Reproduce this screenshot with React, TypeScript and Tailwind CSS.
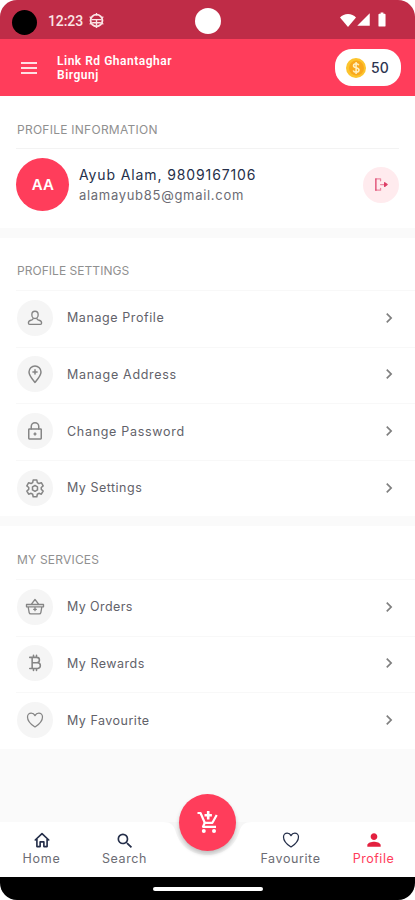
import type { ReactNode } from 'react'
import { MdBatteryFull, MdChevronRight, MdPerson, MdSearch, MdSignalCellular4Bar } from 'react-icons/md'
import { IoHeartOutline } from 'react-icons/io5'

interface RowItem {
  label: string
  tracking: string
  icon: ReactNode
}

const stroke = {
  viewBox: '0 0 24 24',
  fill: 'none',
  stroke: 'currentColor',
  strokeLinecap: 'round' as const,
  strokeLinejoin: 'round' as const,
}

function MenuIcon() {
  return (
    <svg viewBox="0 0 16 12" stroke="#ffdfe3" strokeWidth="2" className="h-[12px] w-[16px]">
      <path d="M0 1h16M0 6h16M0 11h16" />
    </svg>
  )
}

function PersonIcon() {
  return (
    <svg {...stroke} strokeWidth="1.8" className="h-[18px] w-[18px]">
      <path d="M12 3c2.500 0 4.200 1.900 4.200 4.500S14.400 12.700 12 12.700 7.800 10.100 7.800 7.500 9.500 3 12 3Z" />
      <path d="M9.500 12.500c0 1.700-1.200 2-3 2.500-2.100.6-3.300 1.800-3.300 3.800 0 1.100.5 1.700 1.600 1.700h14.400c1.100 0 1.600-.6 1.600-1.700 0-2-1.200-3.200-3.300-3.800-1.800-.5-3-.8-3-2.500" />
    </svg>
  )
}

function PinIcon() {
  return (
    <svg {...stroke} strokeWidth="1.8" className="h-[20px] w-[20px]">
      <path d="M12 22C9 18.500 4.800 14 4.800 9.600a7.200 7.200 0 0 1 14.400 0C19.200 14 15 18.500 12 22Z" />
      <path d="M12 7v5M9.500 9.500h5" />
    </svg>
  )
}

function LockIcon() {
  return (
    <svg {...stroke} strokeWidth="1.8" className="h-[20px] w-[20px]">
      <rect x="4.500" y="9.500" width="15" height="12" rx="0.8" />
      <path d="M7.500 9.500V6.500a4.500 4.500 0 0 1 9 0v3M12 14.300v2.400M10.900 15.500h2.200" />
    </svg>
  )
}

function GearIcon() {
  return (
    <svg {...stroke} strokeWidth="1.8" className="h-[20px] w-[20px]">
      <path d="M9.800 2.500h4.400l.6 3 1.900 1.100 2.900-1 2.200 3.800-2.300 2v2.200l2.300 2-2.200 3.800-2.900-1-1.900 1.100-.6 3H9.800l-.6-3-1.900-1.100-2.900 1-2.200-3.800 2.300-2v-2.200l-2.300-2 2.200-3.800 2.900 1 1.900-1.100Z" />
      <path d="M12 9l3 1.700v3.600L12 16l-3-1.700v-3.600Z" />
    </svg>
  )
}

function BasketIcon() {
  return (
    <svg {...stroke} strokeWidth="1.6" className="h-[20px] w-[20px]">
      <path d="M1.800 9h20.400v2.800H1.800zM3.800 12l1.200 6.700a2 2 0 0 0 2 1.600h10a2 2 0 0 0 2-1.600l1.200-6.700M7.500 8.800 12 3l4.500 5.800M12 13.200v3.200M10.400 14.800h3.200" />
    </svg>
  )
}

function BitcoinIcon() {
  return (
    <svg {...stroke} strokeWidth="2.1" className="h-[18px] w-[18px]">
      <path d="M5 4.500h9.300a3.600 3.600 0 0 1 0 7.200H8.200h7.100a3.800 3.800 0 0 1 0 7.600H5M8.200 4.500v14.800M10 1.800v2.700M14 1.800v2.700M10 19.300V22M14 19.300V22" />
    </svg>
  )
}

function LogoutIcon() {
  return (
    <svg {...stroke} strokeWidth="2" className="h-[15px] w-[15px] text-[#dd3d66]">
      <path d="M3 3v18" />
      <path d="M3 3h7.500v3M3 21h7.500v-3M10.500 12H16" opacity="0.55" />
      <path d="M17 9 21 12 17 15Z" fill="currentColor" />
    </svg>
  )
}

function HomeIcon() {
  return (
    <svg {...stroke} strokeWidth="2.2" className="h-[18px] w-[18px]">
      <path d="M3 12 12 3.500l9 8.500M5.200 10.500v10.300h4.300v-6.300h5v6.300h4.300V10.500" />
    </svg>
  )
}

function CartIcon() {
  return (
    <svg viewBox="0 0 24 24" fill="none" stroke="currentColor" strokeWidth="2.2" className="h-[24px] w-[24px]">
      <path d="M1.500 3h3l4.300 9.800h7.600L20.700 5" strokeLinejoin="round" />
      <path d="M12.200 1v8.500M8.500 5.300h7.400" strokeWidth="2.6" />
      <path d="M8.800 12.800 7 16.800h13" strokeLinejoin="round" />
      <circle cx="7.800" cy="21" r="2" fill="currentColor" stroke="none" />
      <circle cx="18" cy="21" r="2" fill="currentColor" stroke="none" />
    </svg>
  )
}

function BallIcon() {
  return (
    <svg viewBox="0 0 24 24" fill="none" stroke="#fbe4e5" strokeWidth="3" className="h-[15px] w-[15px]">
      <circle cx="12" cy="12" r="9.500" />
      <path d="M4 10.500h16M5 15.500h14M12 10.500v10" strokeWidth="2.2" />
      <path d="M12 0v4M12 20v4M1 6l3 2M23 6l-3 2M1 18l3-2M23 18l-3-2" strokeWidth="2" />
    </svg>
  )
}

function CoinIcon() {
  return (
    <svg viewBox="0 0 20 20" className="h-[20px] w-[20px]">
      <circle cx="10" cy="10" r="10" fill="#fcc42d" />
      <circle cx="10.500" cy="10" r="7.500" fill="#f9a81c" />
      <path
        d="M12.800 7.300c-.4-1-1.400-1.500-2.700-1.500-1.500 0-2.600.7-2.600 1.900 0 2.900 5.500 1.300 5.500 4.400 0 1.300-1.200 2.100-2.800 2.100-1.500 0-2.600-.6-3-1.700M10.100 4v12"
        fill="none"
        stroke="#fff1c4"
        strokeWidth="1.5"
      />
    </svg>
  )
}

const settings: RowItem[] = [
  { label: 'Manage Profile', tracking: 'tracking-[0.58px]', icon: <PersonIcon /> },
  { label: 'Manage Address', tracking: 'tracking-[0.7px]', icon: <PinIcon /> },
  { label: 'Change Password', tracking: 'tracking-[0.7px]', icon: <LockIcon /> },
  { label: 'My Settings', tracking: 'tracking-[0.5px]', icon: <GearIcon /> },
]

const services: RowItem[] = [
  { label: 'My Orders', tracking: 'tracking-[0.4px]', icon: <BasketIcon /> },
  { label: 'My Rewards', tracking: 'tracking-[0.5px]', icon: <BitcoinIcon /> },
  { label: 'My Favourite', tracking: 'tracking-[0.5px]', icon: <IoHeartOutline className="h-[20px] w-[20px]" /> },
]

function Row({ item }: { item: RowItem }) {
  return (
    <button className="ml-4 flex h-[56.6px] w-[399px] items-center border-t border-[#f8f8f8] pr-4 pb-[2px] pl-px text-left">
      <span className="flex h-9 w-9 items-center justify-center rounded-full bg-[#f5f5f5] text-[#858585]">
        {item.icon}
      </span>
      <span className={`ml-[14px] flex-1 pt-[2px] text-[12.5px] text-[#62626a] ${item.tracking}`}>{item.label}</span>
      <MdChevronRight className="h-5 w-5 text-[#808080]" />
    </button>
  )
}

function Section({ title, tracking, items }: { title: string; tracking: string; items: RowItem[] }) {
  return (
    <section>
      <h2 className={`mb-[10px] h-[18px] pl-[17px] text-[12px] leading-[18px] text-[#909090] ${tracking}`}>{title}</h2>
      {items.map((item) => (
        <Row key={item.label} item={item} />
      ))}
    </section>
  )
}

export default function App() {
  return (
    <div className="h-[900px] w-[415px] overflow-hidden bg-white font-['Inter',sans-serif]">
      <div className="flex h-full flex-col overflow-hidden rounded-[17px] bg-[#fafafa]">
        <div className="flex h-[39px] shrink-0 items-center bg-[#bf2c47] pt-[3px] pr-[24px] pl-3">
          <span className="mt-[3px] h-[25px] w-[25px] rounded-full bg-black" />
          <span className="ml-[11px] w-[36px] font-['Roboto',sans-serif] text-[14px] font-medium tracking-[-0.1px] text-[#fbe4e5]">
            12:23
          </span>
          <span className="-mt-[2px] ml-[5px]">
            <BallIcon />
          </span>
          <span className="ml-[91px] h-[26px] w-[26px] rounded-full bg-white" />
          <div className="-mt-[3px] ml-auto flex items-center text-white">
            <svg viewBox="0 0 16 14" className="h-[14px] w-[16px]" fill="currentColor">
              <path d="M8 14 0 4.500C2 2.200 4.800 1 8 1s6 1.200 8 3.500Z" />
            </svg>
            <MdSignalCellular4Bar className="h-[15px] w-[15px]" />
            <MdBatteryFull className="ml-[2px] h-[17px] w-[18px]" />
          </div>
        </div>

        <header className="flex h-[57px] shrink-0 items-center bg-[#ff3d5b] pr-[14px] pl-[21px] text-white">
          <MenuIcon />
          <div className="ml-[20px] font-['Roboto',sans-serif] text-[12px] leading-[14px] font-semibold tracking-[0.52px]">
            Link Rd Ghantaghar
            <br />
            Birgunj
          </div>
          <div className="ml-auto flex h-[37px] w-[66px] items-center rounded-[17px] bg-white pl-[11px]">
            <CoinIcon />
            <span className="ml-[5px] text-[14px] font-medium text-[#2d3550]">50</span>
          </div>
        </header>

        <section className="h-[132px] shrink-0 bg-white px-4 pt-[25px]">
          <h2 className="h-[18px] pl-px text-[12px] leading-[18px] tracking-[0.26px] text-[#909090]">
            PROFILE INFORMATION
          </h2>
          <div className="mt-[9px] flex items-center border-t border-[#f3f3f3] pt-[9px] pl-[0.4px]">
            <div className="flex h-[53px] w-[53px] items-center justify-center rounded-full bg-[#ff3d5b] pt-[2px] text-[15px] font-semibold text-white">
              AA
            </div>
            <div className="ml-[9.6px] pt-px">
              <p className="text-[14px] leading-[20px] tracking-[0.88px] text-[#252f4a]">Ayub Alam, 9809167106</p>
              <p className="text-[13px] leading-[20px] tracking-[0.7px] text-[#6c6c74]">alamayub85@gmail.com</p>
            </div>
            <button className="ml-auto flex h-9 w-9 items-center justify-center rounded-full bg-[#ffebee]">
              <LogoutIcon />
            </button>
          </div>
        </section>

        <div className="mt-[10px] h-[278px] shrink-0 bg-white pt-[24px]">
          <Section title="PROFILE SETTINGS" tracking="tracking-[0.04px]" items={settings} />
        </div>

        <div className="mt-[10px] h-[223px] shrink-0 bg-white pt-[25px]">
          <Section title="MY SERVICES" tracking="tracking-[0.2px]" items={services} />
        </div>

        <nav className="relative mt-auto flex h-[55px] shrink-0 bg-white pt-[9px] text-[12.5px] text-[#6c6c74]">
          <a className="flex w-[83px] flex-col items-center">
            <span className="text-[#252f4a]">
              <HomeIcon />
            </span>
            <span className="mt-px tracking-[0.7px]">Home</span>
          </a>
          <a className="flex w-[83px] flex-col items-center">
            <MdSearch className="h-[20px] w-[20px] text-[#252f4a]" />
            <span className="-mt-px tracking-[0.6px]">Search</span>
          </a>
          <span className="w-[83px]" />
          <a className="flex w-[83px] flex-col items-center">
            <IoHeartOutline className="-mt-px h-[20px] w-[20px] text-[#252f4a]" />
            <span className="tracking-[0.6px]">Favourite</span>
          </a>
          <a className="flex w-[83px] flex-col items-center text-[#ff3d5b]">
            <MdPerson className="-mt-px h-[20px] w-[20px] text-[#e3213f]" />
            <span className="tracking-[0.5px]">Profile</span>
          </a>
          <svg viewBox="0 0 96 36" className="absolute top-0 left-[159px] h-[36px] w-[97px]" fill="#f6f6f6">
            <path d="M4 0C11 0 14 3 16 9 20 24 32 33 48 33S76 24 80 9C82 3 85 0 92 0Z" />
          </svg>
          <button className="absolute -top-[28px] left-[179px] flex h-[57px] w-[57px] items-center justify-center rounded-full bg-[#ff3d5b] pb-[2px] text-white shadow-[0_3px_4px_rgba(0,0,0,0.22)]">
            <CartIcon />
          </button>
        </nav>
        <div className="flex h-[23px] shrink-0 items-center justify-center bg-black">
          <span className="h-[4px] w-[110px] rounded-full bg-white" />
        </div>
      </div>
    </div>
  )
}
